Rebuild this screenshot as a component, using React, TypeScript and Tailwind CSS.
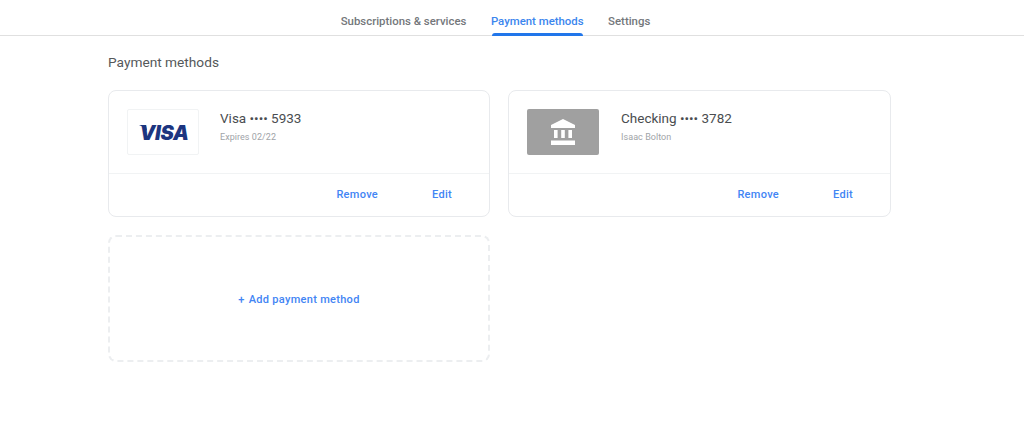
const font = { sans: "font-['Roboto',sans-serif]" };

function Tab({ label, active }: { label: string; active?: boolean }) {
  return (
    <div className="relative flex h-[36px] items-start pt-[14px]">
      <span
        className={`text-[11.4px] font-medium leading-[15px] ${
          active ? "text-[#3b86ee]" : "text-[#74777b]"
        }`}
      >
        {label}
      </span>
      {active && (
        <div className="absolute bottom-0 left-[1px] right-[1px] h-[3px] rounded-t-[3px] bg-[#2176ea]" />
      )}
    </div>
  );
}

function BankIcon() {
  return (
    <svg viewBox="0 0 24 26" className="h-[26px] w-[24px]" fill="#fff">
      <path d="M12 0 24 6v3H0V6z" />
      <rect x="3" y="11" width="3.6" height="8" />
      <rect x="10.2" y="11" width="3.6" height="8" />
      <rect x="17.4" y="11" width="3.6" height="8" />
      <rect x="0" y="21.5" width="24" height="4.5" />
    </svg>
  );
}

function VisaLogo() {
  return (
    <div className="relative flex h-[46px] w-[72px] items-center justify-center rounded-[2px] border border-[#f1f3f4] bg-white pl-[2px] pt-[1px]">
      <span className="font-['Inter',sans-serif] text-[20px] font-black italic leading-none tracking-[-0.4px] text-[#1c3580]">
        VISA
      </span>
      <svg viewBox="0 0 8 6" className="absolute left-[11px] top-[15px] h-[6px] w-[8px]" fill="#1c3580">
        <path d="M0 0h7l1 6C6 3 3 1 0 0z" />
      </svg>
    </div>
  );
}

function MethodCard({
  title,
  sub,
  width,
  gap,
  children,
}: {
  title: string;
  sub: string;
  width: string;
  gap: string;
  children: React.ReactNode;
}) {
  return (
    <div className={`h-[127px] rounded-[8px] border border-[#e8eaed] bg-white ${width}`}>
      <div className={`flex h-[83px] items-start border-b border-[#f1f3f4] pl-[18px] pt-[18px] ${gap}`}>
        {children}
        <div>
          <div className="text-[13.5px] leading-[18px] text-[#4a4d50]">{title}</div>
          <div className="mt-[3px] text-[9px] leading-[14px] tracking-[0.05px] text-[#a0a4a8]">{sub}</div>
        </div>
      </div>
      <div className="flex h-[42px] items-center justify-end gap-[54px] pr-[37px] text-[11px] font-medium tracking-[0.3px] text-[#4285f4]">
        <span>Remove</span>
        <span>Edit</span>
      </div>
    </div>
  );
}

export default function App() {
  return (
    <div className={`h-[448px] w-[1024px] overflow-hidden bg-white ${font.sans}`}>
      <div className="flex h-[36px] justify-center gap-[24.5px] border-b border-[#e0e0e0] pr-[33px]">
        <Tab label="Subscriptions & services" />
        <Tab label="Payment methods" active />
        <Tab label="Settings" />
      </div>
      <div className="pl-[108px]">
        <h1 className="pt-[16px] text-[13.7px] font-normal leading-[20px] text-[#55585a]">
          Payment methods
        </h1>
        <div className="mt-[18px] flex gap-[18px]">
          <MethodCard title="Visa •••• 5933" sub="Expires 02/22" width="w-[382px]" gap="gap-[21px]">
            <VisaLogo />
          </MethodCard>
          <MethodCard title="Checking •••• 3782" sub="Isaac Bolton" width="w-[383px]" gap="gap-[22px]">
            <div className="flex h-[46px] w-[72px] items-center justify-center rounded-[2px] bg-[#a0a0a0]">
              <BankIcon />
            </div>
          </MethodCard>
        </div>
        <div className="mt-[18px] flex h-[127px] w-[382px] items-center justify-center rounded-[8px] border-2 border-dashed border-[#eceef0] pt-[4px] text-[11px] font-medium tracking-[0.3px] text-[#4285f4]">
          <span className="mr-[4px]">+</span>
          <span>Add payment method</span>
        </div>
      </div>
    </div>
  );
}
